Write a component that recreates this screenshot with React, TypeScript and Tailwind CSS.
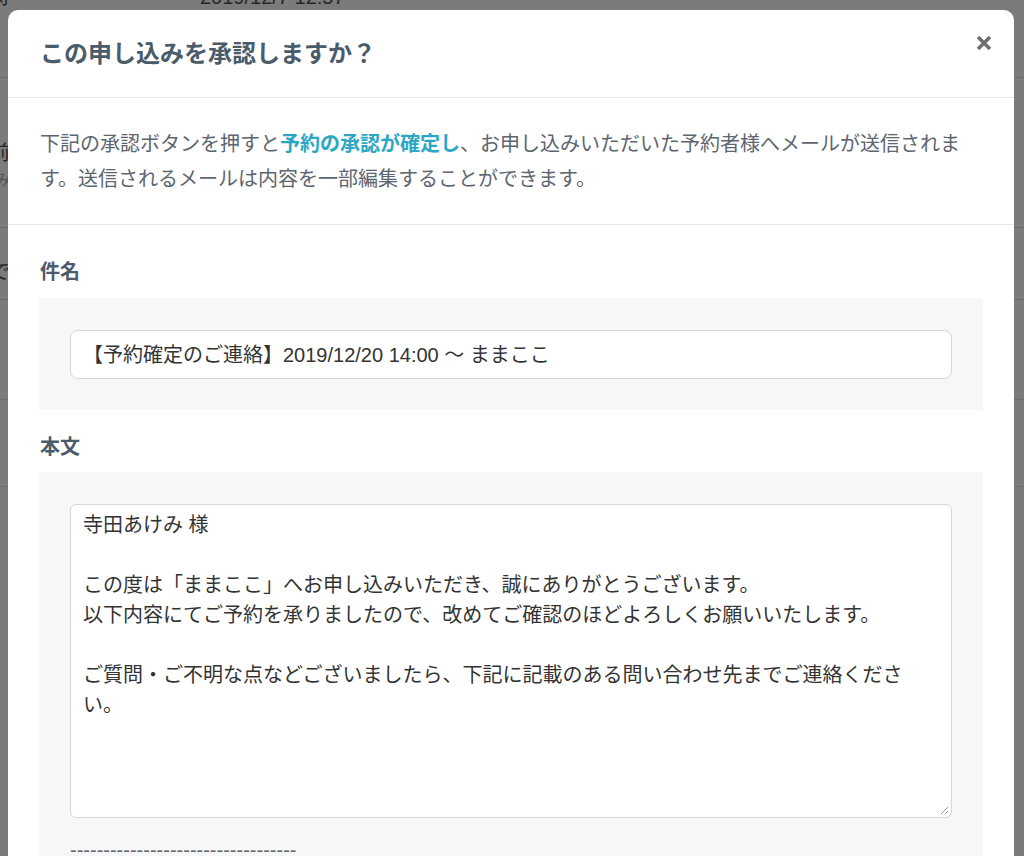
const font = "font-['Liberation_Sans','Noto_Sans_CJK_JP',sans-serif]"

const mailBody = `寺田あけみ 様

この度は「ままここ」へお申し込みいただき、誠にありがとうございます。
以下内容にてご予約を承りましたので、改めてご確認のほどよろしくお願いいたします。

ご質問・ご不明な点などございましたら、下記に記載のある問い合わせ先までご連絡くださ
い。`

// page behind the modal, dimmed by the overlay
function BackgroundPage() {
  const rows = [
    { label: "申込日時", sub: "", value: "2019/12/7 12:57", h: "h-[96px]", pt: "pt-0" },
    { label: "お名前", sub: "てらだ あけみ", value: "寺田あけみ", h: "h-[150px]", pt: "pt-[60px]" },
    { label: "電話番号で", sub: "", value: "", h: "h-[72px]", pt: "pt-[29px]" },
    { label: "", sub: "", value: "", h: "h-[100px]", pt: "pt-0" },
    { label: "", sub: "", value: "", h: "h-[87px]", pt: "pt-0" },
  ]
  return (
    <div className="-mt-[18px] flex flex-col">
      {rows.map((r, i) => (
        <div key={i} className={`flex ${r.h} ${r.pt} border-b border-[#6c6c6c]`}>
          <div className="w-[10px] flex flex-col items-end whitespace-nowrap">
            <span className="text-[20px] leading-[30px] text-[#262626]">{r.label}</span>
            {r.sub && <span className="mt-[2px] text-[15px] leading-[20px] text-[#555]">{r.sub}</span>}
          </div>
          <div className="ml-[190px] text-[20px] leading-[30px] text-[#262626]">{r.value}</div>
        </div>
      ))}
    </div>
  )
}

function CloseIcon() {
  return (
    <svg width="16" height="16" viewBox="0 0 16 16" className="self-start mt-[25px]">
      <path d="M2 2 L14 14 M14 2 L2 14" stroke="#707070" strokeWidth="3.6" />
    </svg>
  )
}

function ResizeGrip() {
  return (
    <svg className="absolute bottom-[2px] right-[2px]" width="10" height="10" viewBox="0 0 10 10">
      <path d="M9 2 L2 9 M9 6 L6 9" stroke="#9a9a9a" strokeWidth="1" />
    </svg>
  )
}

export default function App() {
  return (
    <div className={`relative h-[856px] w-[1024px] overflow-hidden bg-[#7b7b7b] ${font}`}>
      <BackgroundPage />

      {/* Modal */}
      <div className="absolute left-[8px] top-[10px] w-[1006px] rounded-[10px] bg-white">
        <div className="flex h-[88px] items-center justify-between border-b border-[#e4e6e9] pl-8 pr-[22px]">
          <h2 className="text-[24px] font-bold leading-[32px] text-[#4a5b6b]">
            この申し込みを承認しますか？
          </h2>
          <CloseIcon />
        </div>

        <div className="border-b border-[#e4e6e9] px-8 pt-[29px] pb-[27px] text-[20px] leading-[35px] text-[#5c6570]">
          下記の承認ボタンを押すと
          <span className="font-bold text-[#2ba7c6]">予約の承認が確定し</span>
          、お申し込みいただいた予約者様へメールが送信されま
          <br />
          す。送信されるメールは内容を一部編集することができます。
        </div>

        <div className="px-[31px] pt-[32px]">
          <div className="mb-[11px] pl-px text-[20px] font-bold leading-[30px] text-[#4a5b6b]">件名</div>
          <div className="bg-[#f6f7f9] px-[31px] pt-[32px] pb-[31px]">
            <div className="flex h-[49px] items-center rounded-[8px] border border-[#d4d7db] bg-white px-3 text-[20px] text-[#333]">
              【予約確定のご連絡】2019/12/20 14:00 〜 ままここ
            </div>
          </div>

          <div className="mt-[22px] mb-[10px] pl-px text-[20px] font-bold leading-[30px] text-[#4a5b6b]">本文</div>
          <div className="bg-[#f6f7f9] px-[31px] pt-[32px] pb-8">
            <div className="relative h-[314px] rounded-[6px] border border-[#d4d7db] bg-white px-3 pt-[5px] text-[20px] leading-[30px] whitespace-pre-wrap text-[#333]">
              {mailBody}
              <ResizeGrip />
            </div>
            <div className="mt-[17px] text-[20px] leading-[30px] text-[#666]">
              ----------------------------------
            </div>
            <div className="text-[20px] leading-[30px] text-[#333]">ままここ</div>
          </div>
        </div>
      </div>
    </div>
  )
}
